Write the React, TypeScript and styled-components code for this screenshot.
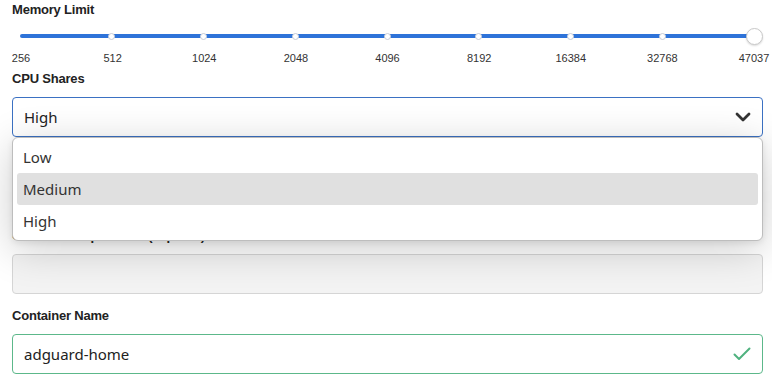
import styled, { createGlobalStyle } from 'styled-components'

const STEPS = ['256', '512', '1024', '2048', '4096', '8192', '16384', '32768', '47037'];
const CPU_OPTIONS = ['Low', 'Medium', 'High'];

const GlobalStyle = createGlobalStyle`
	html, body {
		margin: 0;
		padding: 0;
		background: #ffffff;
	}
	body {
		font-family: "Liberation Sans", Arial, sans-serif;
		color: #222;
	}
`

const Page = styled.div`
	width: 772px;
	height: 378px;
	box-sizing: border-box;
	padding: 2px 9px 0 12px;
	overflow: hidden;
	display: flex;
	flex-direction: column;
`

const Label = styled.div<{ $gap?: number }>`
	font-family: "Liberation Sans", Arial, sans-serif;
	font-size: 13px;
	font-weight: 700;
	line-height: 16px;
	letter-spacing: -0.2px;
	color: #222;
	margin-top: ${props => props.$gap ?? 0}px;
	margin-bottom: 10px;
`

const SliderBox = styled.div`
	padding: 4px 0 0;
	display: flex;
	flex-direction: column;
`

const TrackArea = styled.div`
	position: relative;
	height: 8px;
	margin: 0 9px 0 8px;
`

const Track = styled.div`
	position: absolute;
	left: 0;
	right: 0;
	top: 2px;
	height: 4px;
	border-radius: 2px;
	background: #2e73d9;
`

const TickRow = styled.div`
	position: absolute;
	inset: 0;
	display: flex;
	justify-content: space-between;
	align-items: center;
`

const TickSlot = styled.div`
	width: 0;
	display: flex;
	justify-content: center;
`

const TickDot = styled.span<{ $hidden?: boolean }>`
	flex: none;
	width: 5px;
	height: 5px;
	border-radius: 50%;
	background: #fff;
	border: 1.5px solid #c8ccd6;
	visibility: ${props => props.$hidden ? 'hidden' : 'visible'};
`

const Thumb = styled.span`
	flex: none;
	width: 15px;
	height: 15px;
	border-radius: 50%;
	background: #fff;
	border: 1px solid #c9c9c9;
	box-shadow: 0 1px 2px rgba(0, 0, 0, 0.15);
`

const StepLabels = styled.div`
	display: flex;
	justify-content: space-between;
	margin: 11px 9px 0 9px;
`

const StepLabel = styled.div`
	width: 0;
	display: flex;
	justify-content: center;
	font-size: 11px;
	line-height: 14px;
	color: #333;
	white-space: nowrap;
`

const SelectWrap = styled.div`
	position: relative;
`

const FieldBox = styled.div<{ $tone?: 'focus' | 'valid' | 'disabled' }>`
	height: 40px;
	box-sizing: border-box;
	border-radius: 4px;
	border: 1px solid ${props => props.$tone === 'focus' ? '#3b71c3' : props.$tone === 'valid' ? '#5cb88a' : '#d5d5d5'};
	background: ${props => props.$tone === 'disabled' ? '#f3f3f3' : '#fff'};
	display: flex;
	align-items: center;
	justify-content: space-between;
	padding: 0 11px 0 11px;
	font-family: "Noto Sans", "Open Sans", sans-serif;
	font-size: 15px;
	color: #222;
`

const Menu = styled.div`
	position: absolute;
	left: 0;
	right: 0;
	top: 40px;
	z-index: 5;
	box-sizing: border-box;
	background: #fff;
	border: 1px solid #bdbdbd;
	border-radius: 6px;
	padding: 3px 4px 3px;
	box-shadow: 0 8px 40px rgba(0, 0, 0, 0.2), 0 2px 6px rgba(0, 0, 0, 0.08);
	display: flex;
	flex-direction: column;
`

const MenuItem = styled.div<{ $active?: boolean }>`
	height: 32px;
	display: flex;
	align-items: center;
	padding: 0 6px;
	border-radius: 3px;
	background: ${props => props.$active ? '#e0e0e0' : 'transparent'};
	font-family: "Noto Sans", "Open Sans", sans-serif;
	font-size: 15px;
	color: #333;
`

const Note = styled.div`
	height: 91px;
	display: flex;
	align-items: flex-start;
	padding-top: 12px;
	box-sizing: border-box;
`

const WarnMark = styled.span`
	width: 6px;
	height: 10px;
	background: #e8c24a;
	border-radius: 2px;
`

const Chevron = () => (
	<svg width="16" height="10" viewBox="0 0 16 10">
		<polyline points="2,2 8,8 14,2" fill="none" stroke="#333" strokeWidth="2.8" strokeLinecap="round" strokeLinejoin="round" />
	</svg>
)

const Check = () => (
	<svg width="18" height="14" viewBox="0 0 18 14">
		<polyline points="1.5,7.5 6,12 16.5,1.5" fill="none" stroke="#4fb27f" strokeWidth="2" strokeLinecap="round" strokeLinejoin="round" />
	</svg>
)

const App = () => {
	return (
		<Page>
			<GlobalStyle />
			<Label>Memory Limit</Label>
			<SliderBox>
				<TrackArea>
					<Track />
					<TickRow>
						{STEPS.map((step, i) => (
							<TickSlot key={step}>
								{i === STEPS.length - 1 ? <Thumb /> : <TickDot $hidden={i === 0} />}
							</TickSlot>
						))}
					</TickRow>
				</TrackArea>
				<StepLabels>
					{STEPS.map(step => <StepLabel key={step}>{step}</StepLabel>)}
				</StepLabels>
			</SliderBox>

			<Label $gap={6}>CPU Shares</Label>
			<SelectWrap>
				<FieldBox $tone="focus">
					<span>High</span>
					<Chevron />
				</FieldBox>
				<Menu>
					{CPU_OPTIONS.map(opt => (
						<MenuItem key={opt} $active={opt === 'Medium'}>{opt}</MenuItem>
					))}
				</Menu>
			</SelectWrap>
			<Note>
				<WarnMark />
			</Note>

			<Label>Container Capabilities (cap-add)</Label>
			<FieldBox $tone="disabled" />

			<Label $gap={14}>Container Name</Label>
			<FieldBox $tone="valid">
				<span>adguard-home</span>
				<Check />
			</FieldBox>
		</Page>
	)
}

export default App;
